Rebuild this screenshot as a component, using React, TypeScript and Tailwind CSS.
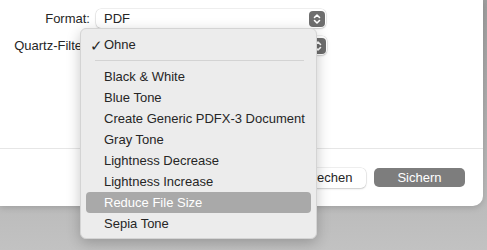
import React from "react";

const Stepper = () => (
  <div className="w-[16px] h-[16px] rounded-[4px] bg-[#6e6e6e] flex items-center justify-center">
    <svg width="10" height="12" viewBox="0 0 10 12" fill="none" stroke="white" strokeWidth="1.6" strokeLinecap="round" strokeLinejoin="round">
      <path d="M2.5 4.5 L5 2 L7.5 4.5" />
      <path d="M2.5 7.5 L5 10 L7.5 7.5" />
    </svg>
  </div>
);

const items = [
  "Black & White",
  "Blue Tone",
  "Create Generic PDFX-3 Document",
  "Gray Tone",
  "Lightness Decrease",
  "Lightness Increase",
  "Reduce File Size",
  "Sepia Tone",
];

export default function App() {
  return (
    <div
      className="relative w-[487px] h-[250px] overflow-hidden bg-gradient-to-b from-[#9e9e9e] to-[#c2c2c2] text-[13px] text-[#262626]"
      style={{ fontFamily: '"Liberation Sans", Arial, sans-serif' }}
    >
      <div className="w-[483px] h-[206px] bg-white rounded-br-[10px] flex flex-col shadow-[0_2px_6px_rgba(0,0,0,0.15)]">
        <div className="h-[148px] flex flex-col pt-[9px] gap-[8px]">
          <div className="flex items-center h-[19px]">
            <div className="w-[90px] text-right">Format:</div>
            <div className="ml-[6px] w-[230px] h-[19px] bg-white rounded-[5px] shadow-[0_0_0_0.5px_rgba(0,0,0,0.12),0_1px_2px_rgba(0,0,0,0.15)] flex items-center justify-between pl-[8px] pr-[1.5px]">
              <span>PDF</span>
              <Stepper />
            </div>
          </div>
          <div className="flex items-center h-[19px]">
            <div className="w-[90px] text-right whitespace-nowrap">Quartz-Filter:</div>
            <div className="ml-[6px] w-[231px] h-[19px] bg-white rounded-[5px] shadow-[0_0_0_0.5px_rgba(0,0,0,0.12),0_1px_2px_rgba(0,0,0,0.15)] flex items-center justify-end pl-[8px] pr-[1.5px]">
              <Stepper />
            </div>
          </div>
        </div>
        <div className="h-px bg-[#e6e6e6]" />
        <div className="flex-1 flex items-center justify-end pr-[18px] gap-[8px]">
          <div className="w-[90px] h-[20px] bg-white rounded-[5px] shadow-[0_0_0_0.5px_rgba(0,0,0,0.12),0_1px_2px_rgba(0,0,0,0.15)] flex items-center justify-center">
            Abbrechen
          </div>
          <div className="w-[91px] h-[19px] bg-[#7d7d7d] rounded-[5px] text-white flex items-center justify-center">
            Sichern
          </div>
        </div>
      </div>

      <div className="absolute left-[80px] top-[28px] w-[237px] h-[211px] bg-[#ececec] rounded-[6px] border border-[#d4d4d4] shadow-[0_4px_14px_rgba(0,0,0,0.22)] pt-[5px] pb-[4px]">
        <div className="h-[21px] flex items-center relative pl-[23px]">
          <span className="absolute left-[9px] top-[1px] text-[15px]">✓</span>
          Ohne
        </div>
        <div className="h-[11px] flex items-center ml-[14px] mr-[12px]">
          <div className="h-px w-full bg-[#d3d3d3]" />
        </div>
        {items.map((it) => {
          const sel = it === "Reduce File Size";
          return (
            <div key={it} className={"h-[21px] flex items-center mx-[5px] rounded-[4px] pl-[18px] " + (sel ? "bg-[#a9a9a9] text-white" : "")}>
              {it}
            </div>
          );
        })}
      </div>
    </div>
  );
}
